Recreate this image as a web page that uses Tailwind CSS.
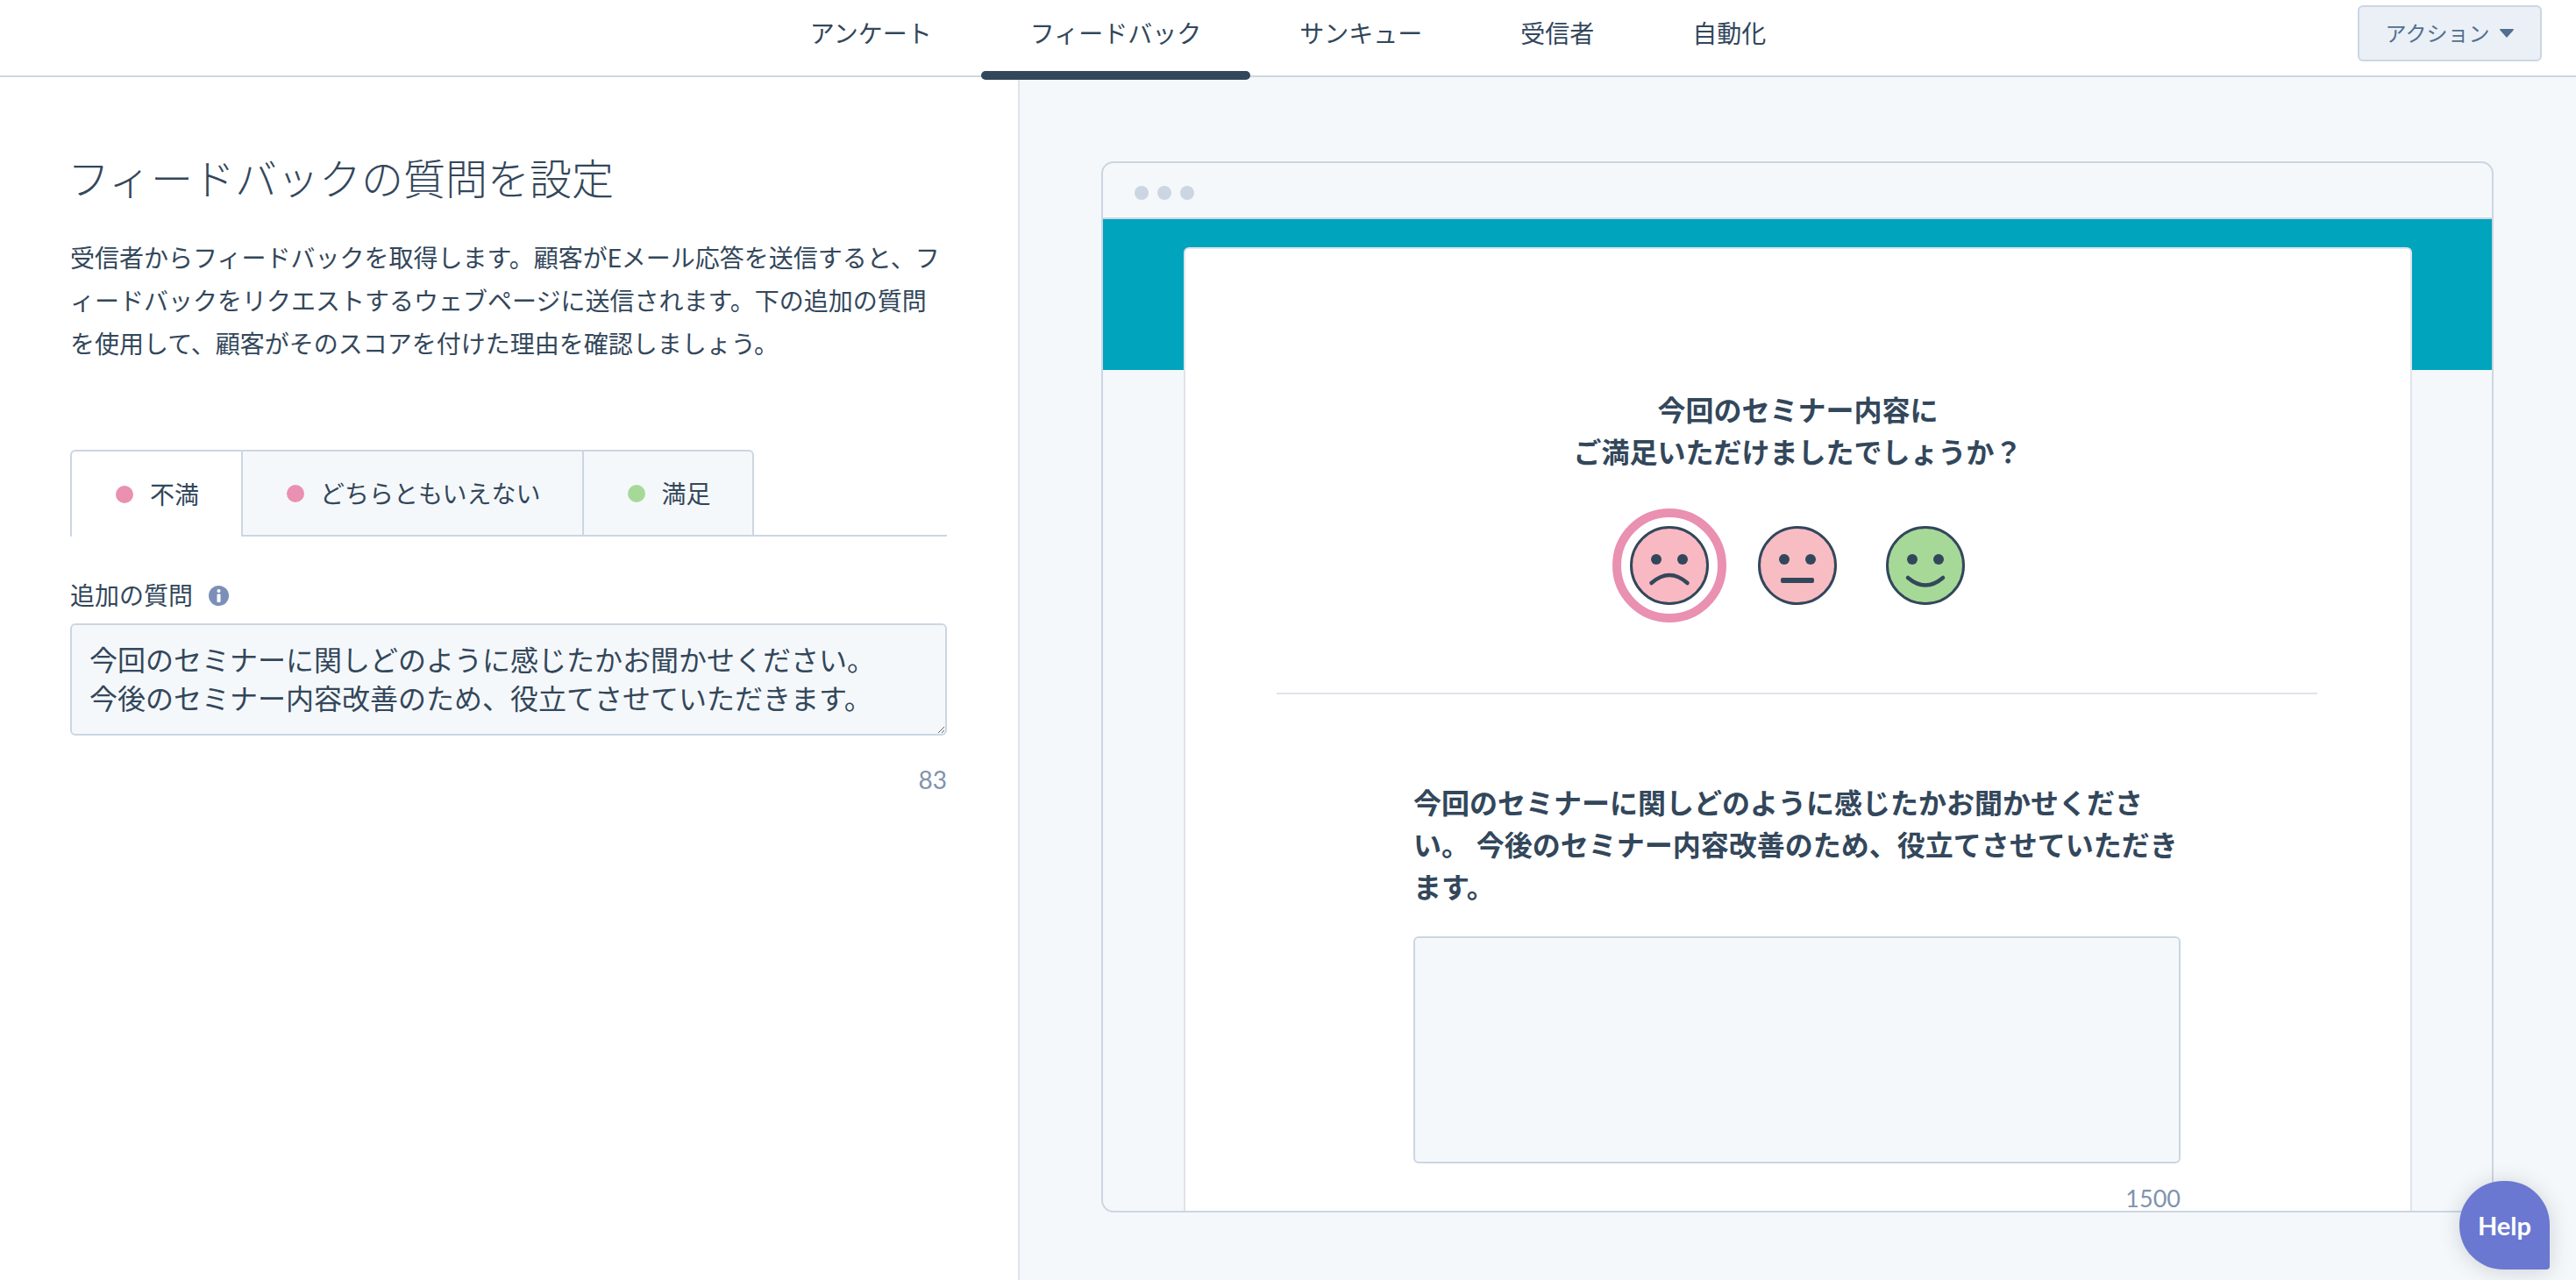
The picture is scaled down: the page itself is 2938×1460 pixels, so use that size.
<!DOCTYPE html>
<html lang="ja">
<head>
  <meta charset="utf-8"/>
  <title>フィードバック</title>
  <script src="https://cdn.jsdelivr.net/npm/@tailwindcss/browser@4"></script>
</head>
<body class="h-screen overflow-hidden bg-white text-[#33475b] font-['Lato','Noto_Sans_CJK_JP',sans-serif]">
  <div class="relative flex h-full flex-col">
    <!-- top tabs -->
    <header class="grid h-[88px] shrink-0 grid-cols-[1fr_auto_1fr] border-b-2 border-[#cbd6e2]">
      <div></div>
      <nav class="flex text-[28px]">
        <a class="flex h-[76px] items-center px-[56px]">アンケート</a>
        <a class="relative flex h-[76px] items-center px-[56px]">フィードバック<span class="absolute left-0 right-0 top-[81px] z-10 h-[10px] rounded-[5px] bg-[#33475b]"></span></a>
        <a class="flex h-[76px] items-center px-[56px]">サンキュー</a>
        <a class="flex h-[76px] items-center px-[56px]">受信者</a>
        <a class="flex h-[76px] items-center px-[56px]">自動化</a>
      </nav>
      <div class="flex justify-end pr-[39px] pt-[6px]">
        <button class="flex h-[64px] w-[210px] items-center justify-center gap-[12px] rounded-[6px] border-2 border-[#cbd6e2] bg-[#eaf0f6] text-[24px] text-[#516f90]">
          アクション
          <svg class="h-[10px] w-[16px]" viewBox="0 0 16 10"><path d="M0 1a1 1 0 0 1 1-1h14a1 1 0 0 1 1 1L8 10z" fill="#516f90"/></svg>
        </button>
      </div>
    </header>

    <main class="flex min-h-0 flex-1">
      <!-- settings -->
      <section class="w-[1163px] shrink-0 border-r-2 border-[#dfe3eb] pl-[80px] pr-[81px] pt-[86px]">
        <h1 class="-ml-[3px] text-[48px] font-light leading-[60px]">フィードバックの質問を設定</h1>
        <p class="mt-[36px] text-[28px] leading-[49px]">受信者からフィードバックを取得します。顧客がEメール応答を送信すると、フィードバックをリクエストするウェブページに送信されます。下の追加の質問を使用して、顧客がそのスコアを付けた理由を確認しましょう。</p>

        <div class="mt-[96px] flex h-[99px] border-b-2 border-[#cbd6e2] text-[28px]">
          <div class="-mb-[2px] flex items-center gap-[19px] rounded-tl-[6px] border-x-2 border-t-2 border-[#cbd6e2] bg-white pl-[50px] pr-[48px]">
            <span class="h-[20px] w-[20px] rounded-full bg-[#ea90b1]"></span>不満
          </div>
          <div class="flex items-center gap-[18px] border-r-2 border-t-2 border-[#cbd6e2] bg-[#f5f8fa] pl-[50px] pr-[48px]">
            <span class="h-[20px] w-[20px] rounded-full bg-[#ea90b1]"></span>どちらともいえない
          </div>
          <div class="flex items-center gap-[18px] rounded-tr-[6px] border-r-2 border-t-2 border-[#cbd6e2] bg-[#f5f8fa] pl-[50px] pr-[48px]">
            <span class="h-[20px] w-[20px] rounded-full bg-[#a6d998]"></span>満足
          </div>
        </div>

        <label class="mt-[49px] flex h-[36px] items-center gap-[18px] text-[28px]">
          追加の質問
          <svg class="h-[23px] w-[23px]" viewBox="0 0 23 23"><circle cx="11.5" cy="11.5" r="11.5" fill="#7c8fb8"/><rect x="9.5" y="4" width="4" height="4" rx="2" fill="#fff"/><rect x="9.5" y="9.5" width="4" height="9.5" rx="1" fill="#fff"/></svg>
        </label>
        <textarea readonly class="mt-[14px] block h-[128px] w-full rounded-[6px] border-2 border-[#cbd6e2] bg-[#f5f8fa] px-[20px] py-[18px] text-[32px] leading-[44px] outline-none">今回のセミナーに関しどのように感じたかお聞かせください。
今後のセミナー内容改善のため、役立てさせていただきます。</textarea>
        <div class="mt-[32px] text-right text-[28px] leading-[36px] text-[#8093ae]">83</div>
      </section>

      <!-- preview -->
      <section class="flex min-w-0 flex-1 bg-[#f5f8fa] pb-[77px] pl-[93px] pr-[94px] pt-[96px]">
        <div class="flex w-full flex-col overflow-hidden rounded-[14px] border-2 border-[#cbd6e2] bg-[#f5f8fa]">
          <div class="flex h-[64px] shrink-0 items-center gap-[10px] border-b-2 border-[#cbd6e2] pl-[36px] pt-[6px]">
            <span class="h-[16px] w-[16px] rounded-full bg-[#cbd6e2]"></span>
            <span class="h-[16px] w-[16px] rounded-full bg-[#cbd6e2]"></span>
            <span class="h-[16px] w-[16px] rounded-full bg-[#cbd6e2]"></span>
          </div>
          <div class="h-[172px] shrink-0 bg-[#00a4bd]"></div>
          <div class="-mt-[140px] ml-[92px] mr-[91px] flex-1 rounded-t-[6px] border-x-2 border-t-2 border-[#dfe3eb] bg-white pt-[160px]">
            <h2 class="text-center text-[32px] font-bold leading-[48px]">今回のセミナー内容に<br/>ご満足いただけましたでしょうか？</h2>
            <div class="mt-[40px] flex justify-center gap-[16px] pr-[1px]">
              <svg class="h-[130px] w-[130px]" viewBox="0 0 130 130">
                <circle cx="65" cy="65" r="60" fill="none" stroke="#ea90b1" stroke-width="10"/>
                <circle cx="65" cy="65" r="43.5" fill="#f8b9c2" stroke="#33475b" stroke-width="3"/>
                <circle cx="50" cy="58" r="6" fill="#33475b"/><circle cx="80" cy="58" r="6" fill="#33475b"/>
                <path d="M44.5 85Q65 67 85.5 85" fill="none" stroke="#33475b" stroke-width="4.5" stroke-linecap="round"/>
              </svg>
              <svg class="h-[130px] w-[130px]" viewBox="0 0 130 130">
                <circle cx="65" cy="65" r="43.5" fill="#f8bcc3" stroke="#33475b" stroke-width="3"/>
                <circle cx="50" cy="58" r="6" fill="#33475b"/><circle cx="80" cy="58" r="6" fill="#33475b"/>
                <rect x="46" y="79" width="38" height="6" rx="2" fill="#33475b"/>
              </svg>
              <svg class="h-[130px] w-[130px]" viewBox="0 0 130 130">
                <circle cx="65" cy="65" r="43.5" fill="#a6d998" stroke="#33475b" stroke-width="3"/>
                <circle cx="50" cy="58" r="6" fill="#33475b"/><circle cx="80" cy="58" r="6" fill="#33475b"/>
                <path d="M45 79Q65 96 85 79" fill="none" stroke="#33475b" stroke-width="4.5" stroke-linecap="round"/>
              </svg>
            </div>
            <hr class="ml-[104px] mr-[106px] mt-[80px] border-t-2 border-[#dfe3eb]"/>
            <div class="ml-[260px] mt-[100px] w-[875px]">
              <p class="text-[32px] font-bold leading-[48px]">今回のセミナーに関しどのように感じたかお聞かせください。 今後のセミナー内容改善のため、役立てさせていただきます。</p>
              <div class="mt-[32px] h-[259px] rounded-[6px] border-2 border-[#cbd6e2] bg-[#f5f8fa]"></div>
              <div class="mt-[22px] text-right text-[27px] leading-[36px] text-[#8093ae]">1500</div>
            </div>
          </div>
        </div>
      </section>
    </main>

    <button class="absolute bottom-[12px] right-[30px] z-20 h-[101px] w-[103px] rounded-[50px] rounded-br-[4px] bg-[#6a78d1] text-[29px] font-bold text-white shadow-[0_2px_24px_rgba(45,62,80,0.2)]">Help</button>
  </div>
</body>
</html>
